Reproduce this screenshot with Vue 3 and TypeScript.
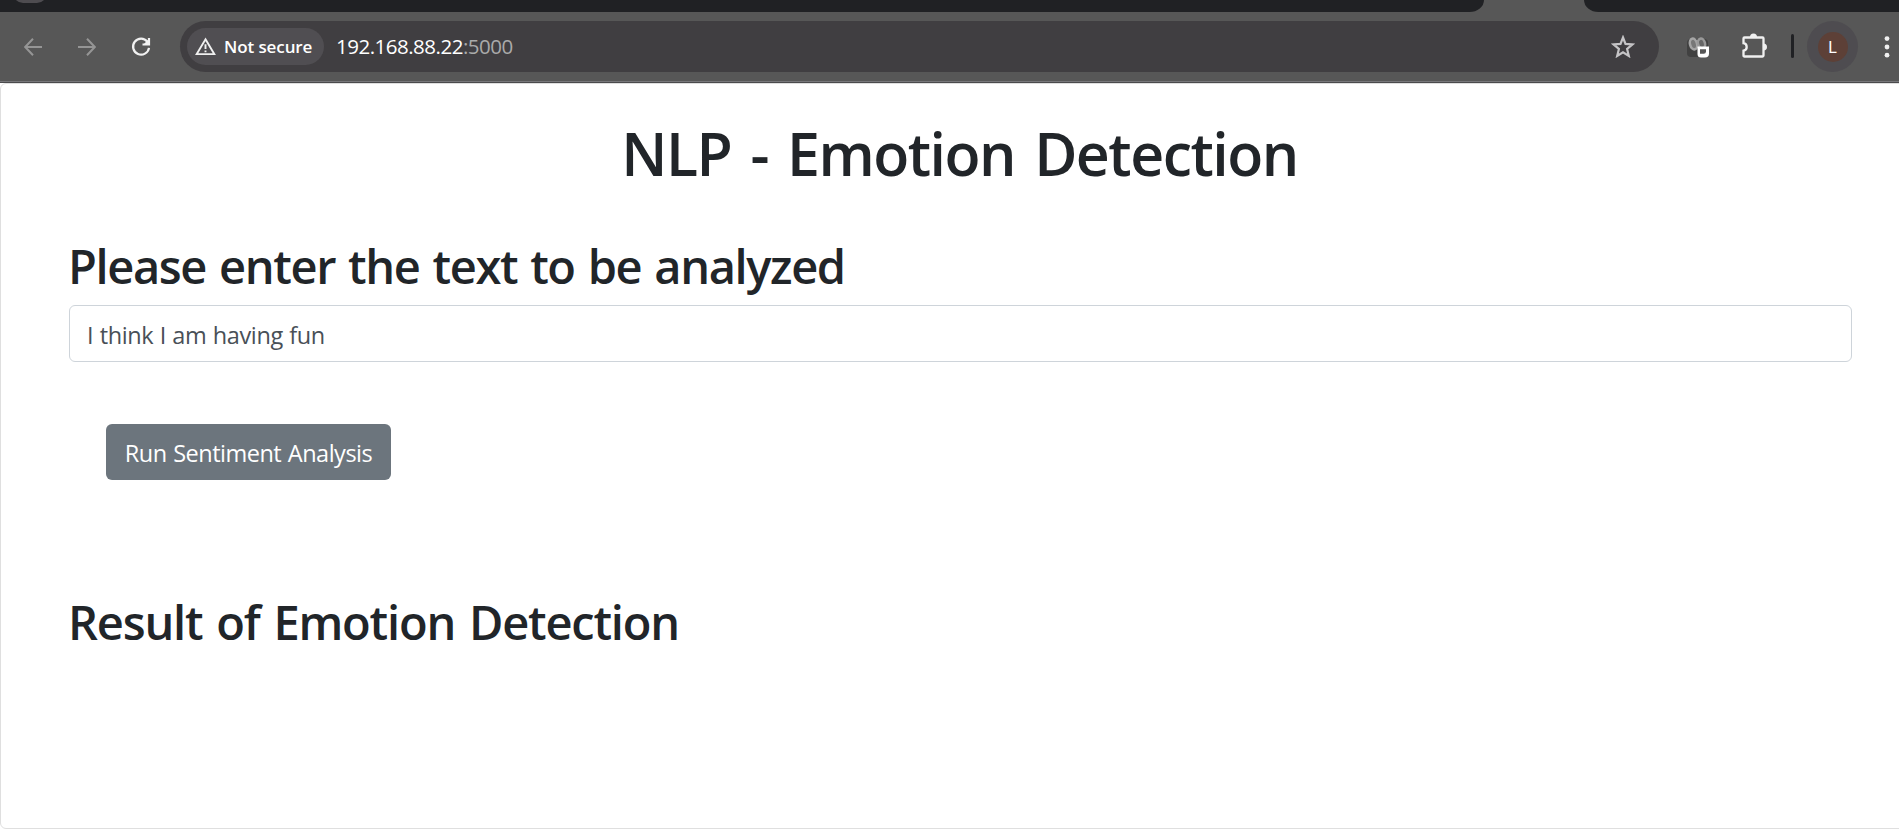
<script setup lang="ts">
import { ref } from 'vue'

const host = '192.168.88.22'
const port = ':5000'
const text = ref('I think I am having fun')
</script>

<template>
  <div class="window">
    <div class="tabs">
      <span class="tab-chip"></span>
      <span class="strip left"></span>
      <span class="strip right"></span>
    </div>
    <header class="toolbar">
      <svg class="nav back" viewBox="0 0 18 18"><path d="M18 9H1.500M9 .8L1.200 9 9 17.200" /></svg>
      <svg class="nav forward" viewBox="0 0 18 18"><path d="M0 9h16.500M9 .8L16.800 9 9 17.200" /></svg>
      <svg class="reload" viewBox="0 0 20 20"><path d="M16.400 4.700A8 8 0 1 0 18 10.800M18 1v6.500h-6.500" /><path class="fill" d="M18.900 1v7h-7z" /></svg>
      <div class="address">
        <div class="chip">
          <svg class="warn" viewBox="0 0 22 19"><path d="M11 2L20.200 17.500H1.800z" /><path d="M11 7.200v5M11 13.600v2" /></svg>
          <span class="secure">Not secure</span>
        </div>
        <span class="url">{{ host }}<span class="port">{{ port }}</span></span>
        <svg class="star" viewBox="0 0 24 23"><path d="M12 2.500l2.500 6.400 7 .5-5.400 4.500 1.700 7L12 17.200l-5.800 3.700 1.700-7L2.500 9.400l7-.5z" /></svg>
      </div>
      <svg class="ext" viewBox="0 0 22 22">
        <rect x="0" y="3" width="21" height="18" rx="4" fill="#414141" />
        <ellipse cx="6.500" cy="8" rx="3.500" ry="5.500" transform="rotate(-15 6.500 8)" fill="#777" stroke="#a5a5a5" stroke-width="2.500" />
        <ellipse cx="14.500" cy="7.500" rx="3.500" ry="5" transform="rotate(-15 14.500 7.500)" fill="#666" stroke="#999" stroke-width="2.500" />
        <path d="M10.500 10.500h11.500v7q0 4-4 4h-4q-3.500 0-3.500-3.500z" fill="#fff" />
        <path d="M13 13.200h6v2.300q0 2.300-2.300 2.300h-3.700z" fill="#555" />
      </svg>
      <svg class="puzzle" viewBox="0 0 25 25">
        <path d="M2.500 4.500h18q1 0 1 1v17q0 1-1 1h-18q-1 0-1-1v-4.800a3.800 3.800 0 0 0 0-7.500V5.500q0-1 1-1z" />
        <path class="fill" d="M8 4a3.500 3.500 0 0 1 7 0zM21.500 10.500a3.500 3.500 0 0 1 0 7z" />
      </svg>
      <span class="divider"></span>
      <div class="profile"><span class="avatar">L</span></div>
      <svg class="menu" viewBox="0 0 6 22"><circle cx="3" cy="2.600" r="2.400" /><circle cx="3" cy="11" r="2.400" /><circle cx="3" cy="19.200" r="2.400" /></svg>
    </header>
    <main class="card">
      <h1>NLP - Emotion Detection</h1>
      <h2 class="prompt">Please enter the text to be analyzed</h2>
      <input v-model="text" class="field" type="text" />
      <button class="run" type="button">Run Sentiment Analysis</button>
      <h2 class="result">Result of Emotion Detection</h2>
    </main>
  </div>
</template>

<style>
html,
body {
  background: #fff;
  overflow: hidden;
}
</style>

<style scoped>
* {
  box-sizing: border-box;
}
.window {
  width: 1899px;
  height: 837px;
  overflow: hidden;
  font-family: 'Open Sans', 'Noto Sans', sans-serif;
  color: #212529;
}
.tabs {
  position: relative;
  display: flex;
  justify-content: space-between;
  height: 12px;
  background: #575757;
}
.strip {
  background: #202124;
}
.strip.left {
  width: 1484px;
  border-bottom-right-radius: 17px 14px;
}
.strip.right {
  width: 315px;
  border-bottom-left-radius: 17px 14px;
}
.tab-chip {
  position: absolute;
  left: 13px;
  top: -20px;
  width: 34px;
  height: 23px;
  border-radius: 10px;
  background: #4e4c50;
}
.toolbar {
  display: flex;
  align-items: center;
  height: 71px;
  padding: 0 0 1px 24px;
  background: #575757;
  border-bottom: 1px solid #4a4a4c;
  box-shadow: inset 0 -1px #77777a;
}
.toolbar > * {
  flex: none;
}
svg {
  display: block;
  fill: none;
}
.nav {
  width: 18px;
  height: 18px;
  stroke: #959595;
  stroke-width: 2;
}
.forward {
  margin-left: 36px;
}
.reload {
  width: 20px;
  height: 20px;
  margin-left: 35px;
  stroke: #f1f1f1;
  stroke-width: 2.200;
}
.reload .fill {
  fill: #f1f1f1;
  stroke: none;
}
.address {
  display: flex;
  align-items: center;
  width: 1479px;
  height: 51px;
  margin-left: 29px;
  padding-left: 7px;
  border-radius: 26px;
  background: #403e41;
}
.chip {
  display: flex;
  align-items: center;
  width: 137px;
  height: 37px;
  padding-left: 8px;
  border-radius: 19px;
  background: #504e52;
}
.warn {
  width: 21px;
  height: 19px;
  margin-top: -1px;
  stroke: #f0f0f0;
  stroke-width: 2;
}
.secure {
  margin-left: 8px;
  color: #fff;
  font-size: 17px;
  font-weight: 600;
  letter-spacing: -0.1px;
  white-space: nowrap;
}
.url {
  width: 190px;
  margin-left: 12px;
  margin-top: -1px;
  color: #fff;
  font-size: 20.500px;
  letter-spacing: -0.500px;
  white-space: nowrap;
}
.port {
  color: #aaa;
}
.star {
  width: 24px;
  height: 23px;
  margin-left: auto;
  margin-right: 24px;
  stroke: #c5c4c6;
  stroke-width: 2.200;
}
.ext {
  width: 22px;
  height: 22px;
  margin-left: 28px;
}
.puzzle {
  width: 25px;
  height: 25px;
  margin-left: 33px;
  margin-top: -3px;
  stroke: #f0f0f0;
  stroke-width: 2.300;
}
.puzzle .fill {
  fill: #f0f0f0;
  stroke: none;
}
.divider {
  width: 3px;
  height: 24px;
  margin-left: 24px;
  margin-top: -1px;
  border-radius: 2px;
  background: #202124;
}
.profile {
  display: flex;
  align-items: center;
  justify-content: center;
  width: 51px;
  height: 51px;
  margin-left: 13px;
  border-radius: 50%;
  background: #4e4c50;
}
.avatar {
  width: 30px;
  height: 30px;
  border-radius: 50%;
  background: #5d4037;
  color: #fff;
  font: 16px/31px Roboto, sans-serif;
  text-align: center;
}
.menu {
  width: 6px;
  height: 22px;
  margin-left: 26px;
  fill: #f0f0f0;
}
.card {
  display: flex;
  flex-direction: column;
  align-items: flex-start;
  width: 1920px;
  height: 746px;
  padding: 0 0 0 68px;
  border: 1px solid #dfdfdf;
  border-radius: 6px;
  background: #fff;
}
h1,
h2 {
  margin: 0;
  font-weight: 600;
  white-space: nowrap;
}
h1 {
  width: 1781px;
  height: 72px;
  margin-top: 33px;
  font-size: 59px;
  line-height: 72px;
  letter-spacing: -1.500px;
  word-spacing: 5.300px;
  text-align: center;
}
h2 {
  height: 58px;
  margin-left: -1px;
  font-size: 47px;
  line-height: 58px;
}
.prompt {
  margin-top: 48px;
  letter-spacing: -1.380px;
  word-spacing: 2.200px;
}
.field {
  width: 1783px;
  height: 57px;
  margin: 10px 0 0;
  padding: 2px 17px 0;
  border: 1px solid #ced4da;
  border-radius: 6px;
  background: #fff;
  color: #495057;
  font: 23.500px 'Open Sans', 'Noto Sans', sans-serif;
  letter-spacing: -0.400px;
  word-spacing: 0.800px;
}
.run {
  width: 285px;
  height: 56px;
  margin: 62px 0 0 37px;
  padding: 2px 0 0;
  border: 0;
  border-radius: 6px;
  background: #6c757d;
  color: #fff;
  font: 23.500px 'Open Sans', 'Noto Sans', sans-serif;
  letter-spacing: -0.500px;
  word-spacing: 1px;
  white-space: nowrap;
}
.result {
  margin-top: 113px;
  letter-spacing: -1.200px;
  word-spacing: 2.900px;
}
</style>
